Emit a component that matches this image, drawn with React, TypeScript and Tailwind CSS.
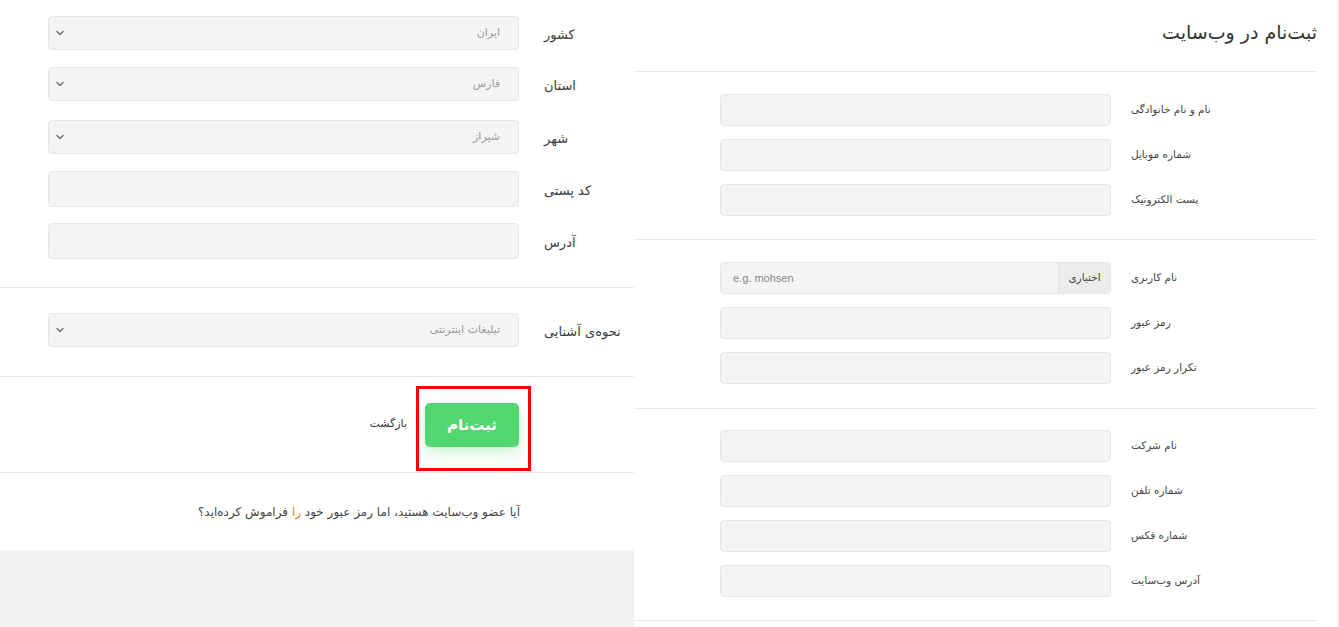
import React from "react";

const font = { fontFamily: '"DejaVu Sans", "Noto Sans", sans-serif' };

function Chevron() {
  return (
    <svg width="10" height="10" viewBox="0 0 10 10" className="shrink-0">
      <path d="M2 3.5 L5 6.5 L8 3.5" fill="none" stroke="#777" strokeWidth="1.6" strokeLinecap="round" strokeLinejoin="round" />
    </svg>
  );
}

function SelectBox({ value }: { value: string }) {
  return (
    <div className="w-[471px] h-[34px] bg-[#f4f4f4] border border-[#e6e6e6] rounded-[4px] flex items-center justify-between pl-[6px] pr-[18px]">
      <Chevron />
      <span dir="rtl" className="text-[11px] text-[#9a9a9a]">{value}</span>
    </div>
  );
}

function LeftRow({ label, children, className }: { label: string; children: React.ReactNode; className?: string }) {
  return (
    <div className={"flex items-center pl-[48px] " + (className || "")}>
      {children}
      <span dir="rtl" className="ml-[25px] text-[13px] text-[#3a3a3a] mt-[4px]">{label}</span>
    </div>
  );
}

function RightRow({ label, children, className }: { label: string; children?: React.ReactNode; className?: string }) {
  return (
    <div className={"flex items-center pl-[86px] " + (className || "")}>
      {children ?? <div className="w-[391px] h-[32px] bg-[#f4f4f4] border border-[#e6e6e6] rounded-[4px]" />}
      <span dir="rtl" className="ml-[20px] text-[10.5px] text-[#444]">{label}</span>
    </div>
  );
}

export default function App() {
  return (
    <div className="flex w-[1339px] h-[627px] bg-white overflow-hidden" style={font}>
      {/* Left panel */}
      <div className="w-[634px] flex flex-col">
        <div className="flex flex-col pt-[16px] pb-[28px]">
          <LeftRow label="کشور"><SelectBox value="ایران" /></LeftRow>
          <LeftRow label="استان" className="mt-[17px]"><SelectBox value="فارس" /></LeftRow>
          <LeftRow label="شهر" className="mt-[19px]"><SelectBox value="شیراز" /></LeftRow>
          <LeftRow label="کد پستی" className="mt-[17px]">
            <div className="w-[471px] h-[36px] bg-[#f4f4f4] border border-[#e6e6e6] rounded-[4px]" />
          </LeftRow>
          <LeftRow label="آدرس" className="mt-[16px]">
            <div className="w-[471px] h-[36px] bg-[#f4f4f4] border border-[#e6e6e6] rounded-[4px]" />
          </LeftRow>
        </div>
        <div className="border-t border-[#e8e8e8] pt-[25px] pb-[29px]">
          <LeftRow label="نحوه‌ی آشنایی"><SelectBox value="تبلیغات اینترنتی" /></LeftRow>
        </div>
        <div className="border-t border-[#e8e8e8] pt-[26px] pb-[25px] flex items-center justify-end pr-[115px]">
          <span dir="rtl" className="text-[11px] text-[#333] mr-[18px] mb-[2px]">بازگشت</span>
          <div className="relative">
            <button dir="rtl" className="w-[94px] h-[44px] rounded-[5px] bg-[#52d670] text-white font-bold text-[15px] shadow-[0_6px_14px_rgba(82,214,112,0.3)]">
              ثبت‌نام
            </button>
            <div className="absolute left-[-9px] top-[-17px] w-[115px] h-[85px] border-[3px] border-[#ff0000] pointer-events-none" />
          </div>
        </div>
        <div className="border-t border-[#e8e8e8] h-[78px] flex items-center justify-end pr-[114px]">
          <p dir="rtl" className="text-[12px] text-[#444]">
            آیا عضو وب‌سایت هستید، اما رمز عبور خود <span className="text-[#c98a2e]">را</span> فراموش کرده‌اید؟
          </p>
        </div>
        <div className="flex-1 bg-[#f2f2f2]" />
      </div>

      {/* Right panel */}
      <div className="w-[683px] flex flex-col">
        <div className="h-[71px] flex items-center justify-end">
          <h1 dir="rtl" className="text-[19px] text-[#333] mt-[-6px]">ثبت‌نام در وب‌سایت</h1>
        </div>
        <div className="border-t border-[#e8e8e8] pt-[22px] pb-[23px] flex flex-col gap-[13px]">
          <RightRow label="نام و نام خانوادگی" />
          <RightRow label="شماره موبایل" />
          <RightRow label="پست الکترونیک" />
        </div>
        <div className="border-t border-[#e8e8e8] pt-[22px] pb-[24px] flex flex-col gap-[13px]">
          <RightRow label="نام کاربری">
            <div className="w-[391px] h-[32px] bg-[#f4f4f4] border border-[#e6e6e6] rounded-[4px] flex overflow-hidden">
              <span className="flex-1 flex items-center pl-[12px] text-[11px] text-[#888]" style={{ fontFamily: '"Liberation Sans", sans-serif' }}>e.g. mohsen</span>
              <span dir="rtl" className="w-[52px] bg-[#ececec] border-l border-[#e0e0e0] flex items-center justify-center text-[10.5px] text-[#444]">اختیاری</span>
            </div>
          </RightRow>
          <RightRow label="رمز عبور" />
          <RightRow label="تکرار رمز عبور" />
        </div>
        <div className="border-t border-[#e8e8e8] pt-[21px] pb-[23px] flex flex-col gap-[13px]">
          <RightRow label="نام شرکت" />
          <RightRow label="شماره تلفن" />
          <RightRow label="شماره فکس" />
          <RightRow label="آدرس وب‌سایت" />
        </div>
        <div className="border-t border-[#e8e8e8]" />
      </div>
      <div className="flex-1 flex justify-end">
        <div className="w-[2px] h-full bg-[#f3f3f3]" />
      </div>
    </div>
  );
}
